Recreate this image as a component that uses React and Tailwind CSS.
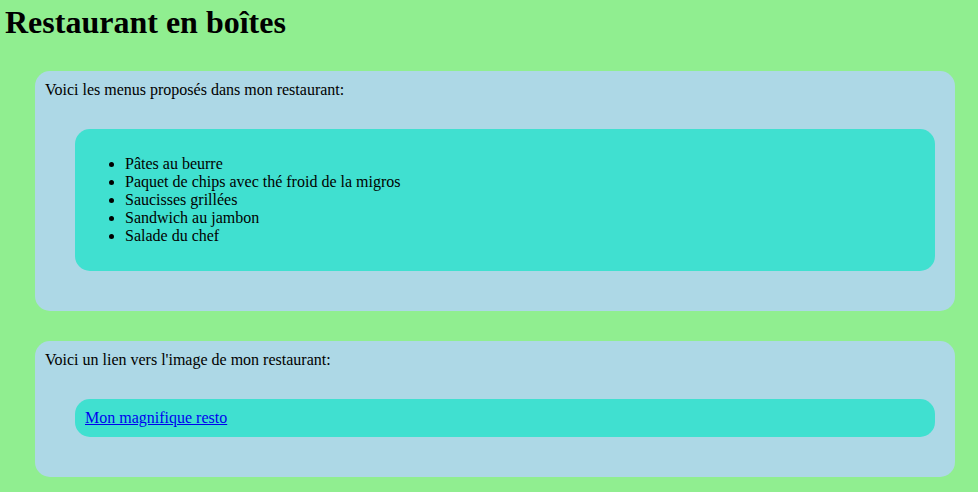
export default function App() {
  const serif = { fontFamily: '"Liberation Serif", "Times New Roman", serif' };
  return (
    <div className="min-h-[492px] bg-[#90EE90] pt-[4px] pl-[5px] pb-[15px] text-black" style={serif}>
      <h1 className="m-0 text-[32px] leading-[37px] font-bold">Restaurant en boîtes</h1>

      <div className="mt-[30px] ml-[30px] w-[920px] rounded-[15px] bg-[#ADD8E6] p-[10px] text-[16px] leading-[18px]">
        <p>Voici les menus proposés dans mon restaurant:</p>
        <div className="mt-[30px] mb-[30px] ml-[30px] w-[860px] rounded-[15px] bg-[#40E0D0] p-[10px]">
          <ul className="my-[16px] list-disc pl-[40px]">
            <li>Pâtes au beurre</li>
            <li>Paquet de chips avec thé froid de la migros</li>
            <li>Saucisses grillées</li>
            <li>Sandwich au jambon</li>
            <li>Salade du chef</li>
          </ul>
        </div>
      </div>

      <div className="mt-[30px] ml-[30px] w-[920px] rounded-[15px] bg-[#ADD8E6] p-[10px] text-[16px] leading-[18px]">
        <p>Voici un lien vers l'image de mon restaurant:</p>
        <div className="mt-[30px] mb-[30px] ml-[30px] w-[860px] rounded-[15px] bg-[#40E0D0] p-[10px]">
          <a href="#" className="text-[#0000EE] underline">Mon magnifique resto</a>
        </div>
      </div>
    </div>
  );
}
